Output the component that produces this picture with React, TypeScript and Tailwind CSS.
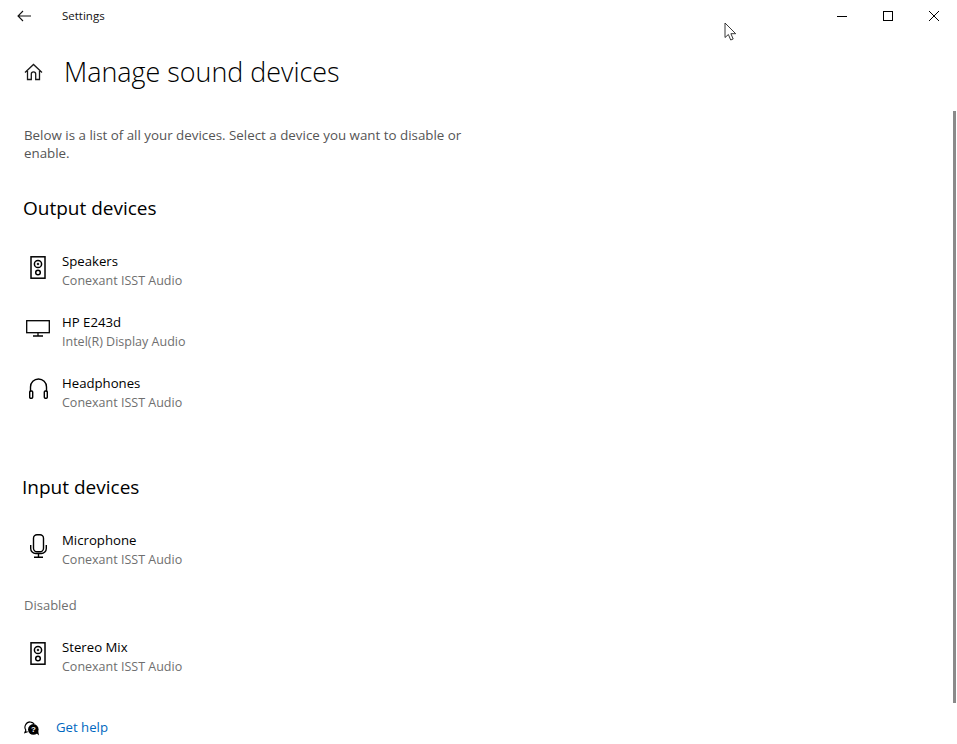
import React from 'react';

const SpeakerIcon = () => (
  <svg width="16" height="23" viewBox="0 0 16 23" fill="none" stroke="#000" strokeWidth="1.5">
    <rect x="1" y="0.800" width="14" height="21.400" />
    <circle cx="8" cy="8" r="3.600" />
    <circle cx="8" cy="8" r="0.900" fill="#000" strokeWidth="0.600" />
    <circle cx="8" cy="16.500" r="2.300" />
  </svg>
);

const MonitorIcon = () => (
  <svg width="24" height="17" viewBox="0 0 24 17" fill="none" stroke="#000" strokeWidth="1.300">
    <rect x="0.700" y="0.700" width="22.600" height="12" />
    <path d="M12 13v3M7 16h10" />
  </svg>
);

const HeadphonesIcon = () => (
  <svg className="mt-[-2px]" width="19" height="21" viewBox="0 0 19 21" fill="none" stroke="#000" strokeWidth="1.400">
    <path d="M1.500 14V9a8 8 0 0 1 16 0v5" />
    <rect x="0.700" y="13" width="3" height="7.300" rx="1" />
    <rect x="15.300" y="13" width="3" height="7.300" rx="1" />
  </svg>
);

const MicIcon = () => (
  <svg width="17" height="24" viewBox="0 0 17 24" fill="none" stroke="#000" strokeWidth="1.400">
    <rect x="3.500" y="0.700" width="10" height="17" rx="3.500" />
    <path d="M0.700 11v3.500a5 5 0 0 0 5 5h5.600a5 5 0 0 0 5-5V11M8.500 19.500v3.500M4 23.300h9" />
  </svg>
);

const HomeIcon = () => (
  <svg width="19" height="18" viewBox="0 0 19 18" fill="none" stroke="#1a1a1a" strokeWidth="1.300">
    <path d="M1 9.500 9.500 1.500l8.500 8M3.500 8v8.500h3.800v-5.500a2.200 2.200 0 0 1 4.400 0v5.500h3.800V8" />
  </svg>
);

const HelpIcon = () => (
  <svg width="16" height="15" viewBox="0 0 18 17">
    <path d="M7 1a6 6 0 0 0-5 9.300L1 13l3-1" fill="none" stroke="#000" strokeWidth="1.300" />
    <path d="M7 1.200a6 6 0 0 1 4.500 2" fill="none" stroke="#000" strokeWidth="1.300" />
    <circle cx="10.500" cy="9.500" r="6" fill="#000" />
    <path d="M13 13l4 3.500-1-5z" fill="#000" />
    <text x="10.500" y="12.800" textAnchor="middle" fontSize="9" fontWeight="700" fill="#fff" fontFamily="'Liberation Sans', sans-serif">?</text>
  </svg>
);

const BackIcon = () => (
  <svg width="14" height="12" viewBox="0 0 14 12" fill="none" stroke="#111" strokeWidth="1.100">
    <path d="M1 6h13M6 1 1 6l5 5" />
  </svg>
);

const MinimizeIcon = () => (
  <svg width="10" height="10" viewBox="0 0 10 10" fill="none" stroke="#000" strokeWidth="1">
    <path d="M0 5.500h10" />
  </svg>
);

const MaximizeIcon = () => (
  <svg width="10" height="10" viewBox="0 0 10 10" fill="none" stroke="#000" strokeWidth="1">
    <rect x="0.500" y="0.500" width="9" height="9" />
  </svg>
);

const CloseIcon = () => (
  <svg width="10" height="10" viewBox="0 0 10 10" fill="none" stroke="#000" strokeWidth="1">
    <path d="M0 0l10 10M10 0 0 10" />
  </svg>
);

// カーソル
const CursorIcon = () => (
  <svg width="13" height="20" viewBox="0 0 13 20" fill="#fff" stroke="#222" strokeWidth="0.900">
    <path d="M1 1v14.500l3.400-3 2.300 5.500 2.500-1-2.300-5.300h4.800z" />
  </svg>
);

const DeviceRow = ({ icon, name, sub }: { icon: React.ReactNode; name: string; sub: string }) => (
  <div className="flex h-[61px] items-start">
    <div className="flex h-[32px] w-[62px] shrink-0 items-center justify-center pl-[14px]">{icon}</div>
    <div>
      <div className="h-[20px] text-[13.200px] leading-[20px] text-black">{name}</div>
      <div className="h-[20px] text-[12.500px] leading-[20px] text-[#6f6f6f]">{sub}</div>
    </div>
  </div>
);

export default function App() {
  return (
    <div className="relative h-[744px] w-[957px] overflow-hidden bg-white font-['Open_Sans','Liberation_Sans',sans-serif]">
      {/* タイトルバー */}
      <div className="flex h-[32px] items-center">
        <div className="flex w-[62px] justify-center pr-[14px]">
          <BackIcon />
        </div>
        <span className="text-[11.500px] text-[#111]">Settings</span>
        <div className="ml-auto flex">
          <div className="flex h-[32px] w-[46px] items-center justify-center"><MinimizeIcon /></div>
          <div className="flex h-[32px] w-[46px] items-center justify-center"><MaximizeIcon /></div>
          <div className="flex h-[32px] w-[46px] items-center justify-center"><CloseIcon /></div>
        </div>
      </div>

      <div className="pl-[24px]">
        <div className="mt-[20px] flex h-[40px] items-center">
          <HomeIcon />
          <h1 className="ml-[21px] text-[26.900px] leading-[40px] font-light text-black">Manage sound devices</h1>
        </div>

        <p className="mt-[34px] w-[450px] text-[13.350px] leading-[18px] text-[#555]">
          Below is a list of all your devices. Select a device you want to disable or enable.
        </p>

        <h2 className="mt-[32px] ml-[-1px] text-[19px] leading-[28px] font-normal text-black">Output devices</h2>
      </div>

      <div className="mt-[29px]">
        <DeviceRow icon={<SpeakerIcon />} name="Speakers" sub="Conexant ISST Audio" />
        <DeviceRow icon={<MonitorIcon />} name="HP E243d" sub="Intel(R) Display Audio" />
        <DeviceRow icon={<HeadphonesIcon />} name="Headphones" sub="Conexant ISST Audio" />
      </div>

      <h2 className="mt-[39px] ml-[22px] text-[19px] leading-[28px] font-normal text-black">Input devices</h2>

      <div className="mt-[29px]">
        <DeviceRow icon={<MicIcon />} name="Microphone" sub="Conexant ISST Audio" />
      </div>

      <div className="mt-[4px] ml-[24px] h-[20px] text-[13px] leading-[20px] text-[#6f6f6f]">Disabled</div>

      <div className="mt-[22px]">
        <DeviceRow icon={<SpeakerIcon />} name="Stereo Mix" sub="Conexant ISST Audio" />
      </div>

      <div className="mt-[18px] ml-[24px] flex h-[24px] items-center">
        <HelpIcon />
        <a className="ml-[16px] text-[13.200px] text-[#0067c0]">Get help</a>
      </div>

      {/* スクロールバー */}
      <div className="absolute top-[111px] left-[953px] h-[592px] w-[3px] bg-[#8a8a8a]" />

      <div className="absolute top-[22px] left-[724px]">
        <CursorIcon />
      </div>
    </div>
  );
}
